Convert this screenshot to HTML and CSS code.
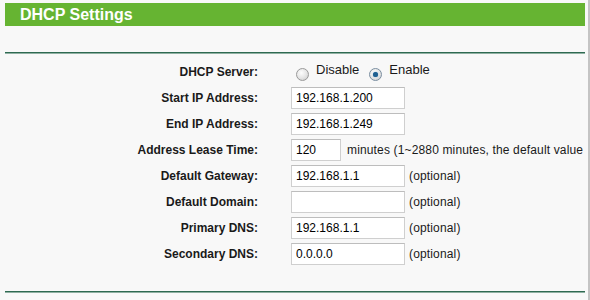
FILE: index.html
```html
<!DOCTYPE html>
<html>
	<head>
		<meta charset="UTF-8">
		<title>DHCP Settings</title>
		<link rel="stylesheet" href="styles.css">
	</head>
	<body>
		<div class="page">
			<div class="title">DHCP Settings</div>
			<div class="rule"></div>

			<div class="form">
				<div class="label">DHCP Server:</div>
				<div class="value">
					<span class="radio"></span><span class="opt">Disable</span>
					<span class="radio checked"></span><span class="opt">Enable</span>
				</div>

				<div class="label">Start IP Address:</div>
				<div class="value"><input class="text" type="text" value="192.168.1.200"></div>

				<div class="label">End IP Address:</div>
				<div class="value"><input class="text" type="text" value="192.168.1.249"></div>

				<div class="label">Address Lease Time:</div>
				<div class="value"><input class="text short" type="text" value="120"><span class="note">minutes (1~2880 minutes, the default value</span></div>

				<div class="label">Default Gateway:</div>
				<div class="value"><input class="text" type="text" value="192.168.1.1"><span class="note">(optional)</span></div>

				<div class="label">Default Domain:</div>
				<div class="value"><input class="text" type="text" value=""><span class="note">(optional)</span></div>

				<div class="label">Primary DNS:</div>
				<div class="value"><input class="text" type="text" value="192.168.1.1"><span class="note">(optional)</span></div>

				<div class="label">Secondary DNS:</div>
				<div class="value"><input class="text" type="text" value="0.0.0.0"><span class="note">(optional)</span></div>
			</div>

			<div class="rule bottom"></div>
		</div>
	</body>
</html>
```

FILE: styles.css
```css
* {
	margin: 0;
	padding: 0;
	box-sizing: border-box;
}

html, body {
	background: #f8f8f8;
}

body {
	font-family: "Liberation Sans", Arial, sans-serif;
	font-size: 12px;
	color: #1a1a1a;
}

.page {
	width: 590px;
	height: 300px;
	padding: 3px 5px 0 5px;
	border-right: 2px solid #c4c4c4;
	overflow: hidden;
}

.title {
	width: 580px;
	height: 23px;
	background: #66b432;
	color: #fff;
	font-weight: bold;
	font-size: 16px;
	line-height: 23px;
	padding-left: 15px;
}

.rule {
	width: 580px;
	height: 2px;
	background: #2f6a52;
	border-bottom: 1px solid #8fb0a2;
	margin-top: 26px;
}

.rule.bottom {
	margin-top: 26px;
}

.form {
	display: grid;
	grid-template-columns: 253px 1fr;
	grid-auto-rows: 22px;
	column-gap: 33px;
	row-gap: 4px;
	margin-top: 7px;
}

.label {
	font-weight: bold;
	text-align: right;
	line-height: 22px;
	white-space: nowrap;
}

.value {
	display: flex;
	align-items: center;
	gap: 4px;
	white-space: nowrap;
}

.text {
	width: 114px;
	height: 22px;
	border: 1px solid #cfcfcf;
	border-top-color: #bdbdbd;
	background: #fff;
	font-family: "Liberation Sans", Arial, sans-serif;
	font-size: 12px;
	color: #000;
	padding: 0 4px;
	outline: none;
}

.text.short {
	width: 50px;
	margin-right: 2px;
}

.note {
	line-height: 22px;
	letter-spacing: 0.15px;
}

.radio {
	width: 13px;
	height: 13px;
	border-radius: 50%;
	border: 1px solid #9a9a9a;
	background: radial-gradient(circle at 40% 35%, #fdfdfd 0%, #e4e4e4 55%, #c4c4c4 100%);
	margin: 5px 3px 0 5px;
	position: relative;
}

.radio.checked {
	border-color: #7a8ea0;
	margin-left: 6px;
}

.radio.checked::after {
	content: "";
	position: absolute;
	left: 3px;
	top: 3px;
	width: 5px;
	height: 5px;
	border-radius: 50%;
	background: #1f5f8f;
	box-shadow: 0 0 1px #2c7ab8;
}

.opt {
	line-height: 16px;
	margin-bottom: 4px;
	font-size: 13px;
}
```
